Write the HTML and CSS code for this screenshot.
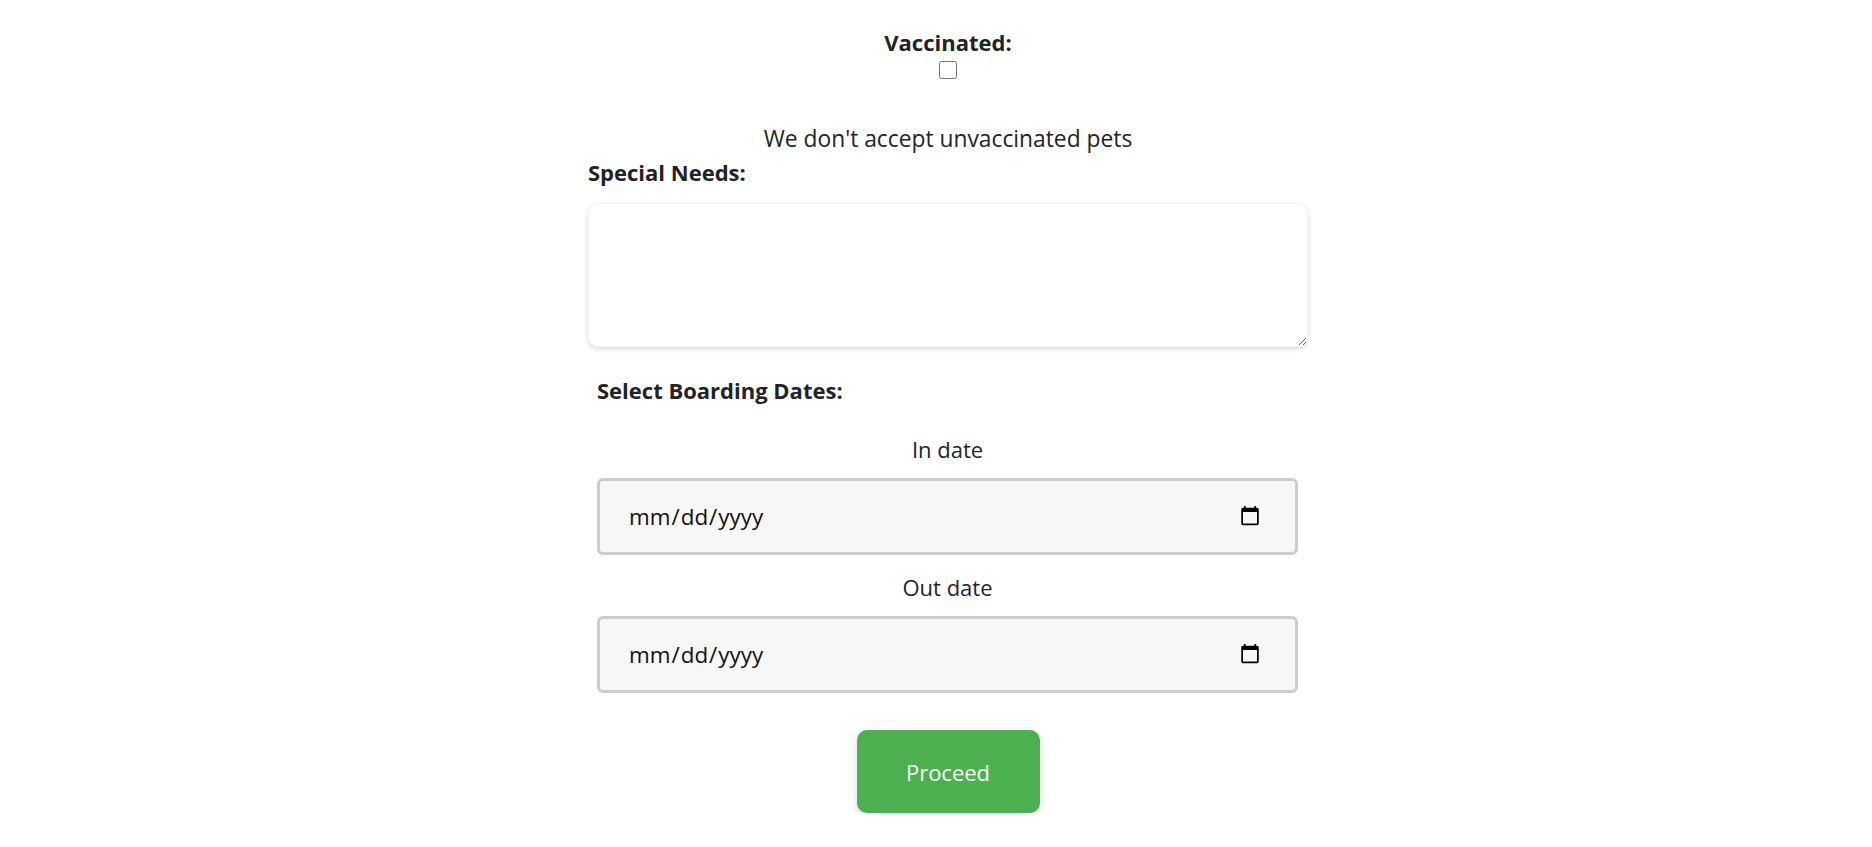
FILE: index.html
```html
<!DOCTYPE html>
<html lang="en">
<head>
<meta charset="utf-8">
<title>Boarding form</title>
<link rel="stylesheet" href="styles.css">
</head>
<body>
<main class="page">
  <form class="form">
    <div class="vacc">
      <label class="label-bold vacc-label" for="vacc">Vaccinated:</label>
      <input type="checkbox" id="vacc" class="check">
    </div>
    <p class="notice">We don't accept unvaccinated pets</p>
    <label class="label-bold needs-label" for="needs">Special Needs:</label>
    <textarea id="needs" class="needs"></textarea>
    <div class="boarding">
      <h3 class="label-bold boarding-title">Select Boarding Dates:</h3>
      <label class="date-label" for="in-date">In date</label>
      <input type="date" id="in-date" class="date-input">
      <label class="date-label" for="out-date">Out date</label>
      <input type="date" id="out-date" class="date-input">
    </div>
    <button type="button" class="proceed">Proceed</button>
  </form>
</main>
</body>
</html>
```

FILE: styles.css
```css
* { box-sizing: border-box; }

html, body {
  margin: 0;
  padding: 0;
  background: #ffffff;
}

body {
  font-family: "Open Sans", "Noto Sans", "Liberation Sans", sans-serif;
  font-size: 22px;
  color: #212529;
}

.page {
  padding-left: 24px;
}

.form {
  width: 720px;
  margin: 0 auto;
  padding-top: 27px;
  display: flex;
  flex-direction: column;
}

.label-bold {
  font-weight: 700;
  font-size: 22px;
  line-height: 30px;
  margin: 0;
  color: #1f2328;
}

.vacc {
  display: flex;
  flex-direction: column;
  align-items: center;
}

.vacc-label {
  text-align: center;
}

.check {
  width: 18px;
  height: 18px;
  margin: 4px 0 0 0;
}

.notice {
  margin: 45px 0 0 0;
  text-align: center;
  font-size: 22.8px;
  line-height: 30px;
}

.needs-label {
  margin-top: 3px;
}

.needs {
  margin-top: 16px;
  width: 720px;
  height: 144px;
  border: 1px solid #f3f3f3;
  border-radius: 10px;
  box-shadow: 0 2px 5px rgba(0, 0, 0, 0.15);
  background: #ffffff;
  font-family: inherit;
  font-size: 18px;
  padding: 10px;
  resize: vertical;
}

.boarding {
  margin-top: 28px;
  padding: 0 10px 0 9px;
  display: flex;
  flex-direction: column;
}

.boarding-title {
  text-align: left;
}

.date-label {
  margin-top: 29px;
  text-align: center;
  line-height: 30px;
}

.date-label + .date-input {
  margin-top: 14px;
}

.date-input + .date-label {
  margin-top: 17px;
}

.date-input {
  width: 100%;
  height: 77px;
  border: 3px solid #cccccc;
  border-radius: 6px;
  background: #f7f7f7;
  padding: 0 34px 0 28px;
  font-family: inherit;
  font-size: 22.4px;
  color: #111111;
}

.date-input::-webkit-calendar-picker-indicator {
  width: 22px;
  height: 24px;
  padding: 0;
  margin: 0;
}

.proceed {
  align-self: center;
  margin-top: 37px;
  width: 183px;
  height: 83px;
  border: none;
  border-radius: 10px;
  background: #4caf50;
  color: #ffffff;
  font-family: inherit;
  font-size: 22px;
  box-shadow: 0 3px 8px rgba(0, 0, 0, 0.15);
  cursor: pointer;
}
```
